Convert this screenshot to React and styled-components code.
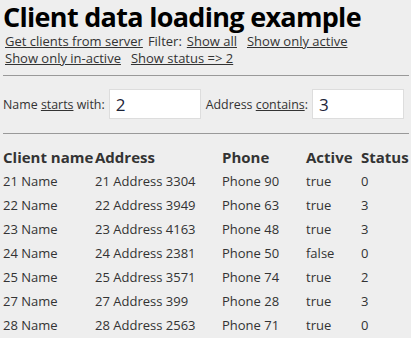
import styled, { createGlobalStyle } from 'styled-components';

const Global = createGlobalStyle`
  html, body {
    margin: 0;
    padding: 0;
    background: #eeeeee;
  }
  body {
    font-family: "Open Sans", "Noto Sans", sans-serif;
    color: #333;
  }
`;

const Page = styled.div`
  padding: 0 2px 0 3px;
`;

const Title = styled.h1`
  margin: 0;
  font-size: 27px;
  line-height: 33px;
  font-weight: 700;
  color: #000;
  letter-spacing: -0.7px;
`;

const Links = styled.div`
  display: flex;
  flex-wrap: wrap;
  column-gap: 5px;
  padding-left: 2px;
  font-size: 13px;
  line-height: 17px;
`;

const Link = styled.a`
  color: #333;
  text-decoration: underline;
  cursor: pointer;
  margin-right: ${p => (p.$spaced ? 5 : 0)}px;
`;

const Rule = styled.hr`
  border: 0;
  border-top: 1px solid #999;
  margin: ${p => p.$top}px 0 0 0;
`;

const Filters = styled.div`
  display: flex;
  align-items: center;
  gap: 4px;
  margin-top: 13px;
  font-size: 12.4px;
`;

const Label = styled.label`
  white-space: nowrap;
  & u { text-decoration: underline; }
`;

const Input = styled.input`
  box-sizing: border-box;
  width: 92px;
  height: 30px;
  border: 1px solid #ddd;
  background: #fff;
  padding: 0 6px;
  font: inherit;
  font-size: 17px;
  color: #1c2438;
  margin-right: 1px;
  outline: none;
`;

const Table = styled.table`
  width: 100%;
  margin-top: 11px;
  border-collapse: collapse;
  table-layout: fixed;
  font-size: 13px;
`;

const Th = styled.th`
  text-align: left;
  font-size: 15px;
  font-weight: 700;
  padding: 0;
  height: 24px;
  width: ${p => (p.$w ? `${p.$w}px` : 'auto')};
  white-space: nowrap;
`;

const Td = styled.td`
  padding: 0;
  height: 24px;
  white-space: nowrap;
`;

const clients = [
  [21, 3304, 90, true, 0],
  [22, 3949, 63, true, 3],
  [23, 4163, 48, true, 3],
  [24, 2381, 50, false, 0],
  [25, 3571, 74, true, 2],
  [27, 399, 28, true, 3],
  [28, 2563, 71, true, 0],
];

export default function App() {
  return (
    <Page>
      <Global />
      <Title>Client data loading example</Title>
      <Links>
        <Link>Get clients from server</Link>
        <span>Filter:</span>
        <Link $spaced>Show all</Link>
        <Link>Show only active</Link>
        <Link $spaced>Show only in-active</Link>
        <Link>Show status =&gt; 2</Link>
      </Links>
      <Rule $top={8} />
      <Filters>
        <Label>Name <u>starts</u> with:</Label>
        <Input defaultValue="2" />
        <Label>Address <u>contains</u>:</Label>
        <Input defaultValue="3" />
      </Filters>
      <Rule $top={14} />
      <Table>
        <thead>
          <tr>
            <Th $w={92}>Client name</Th>
            <Th $w={127}>Address</Th>
            <Th $w={84}>Phone</Th>
            <Th $w={55}>Active</Th>
            <Th>Status</Th>
          </tr>
        </thead>
        <tbody>
          {clients.map(([id, addr, phone, active, status]) => (
            <tr key={id}>
              <Td>{id} Name</Td>
              <Td>{id} Address {addr}</Td>
              <Td>Phone {phone}</Td>
              <Td>{String(active)}</Td>
              <Td>{status}</Td>
            </tr>
          ))}
        </tbody>
      </Table>
    </Page>
  );
}
